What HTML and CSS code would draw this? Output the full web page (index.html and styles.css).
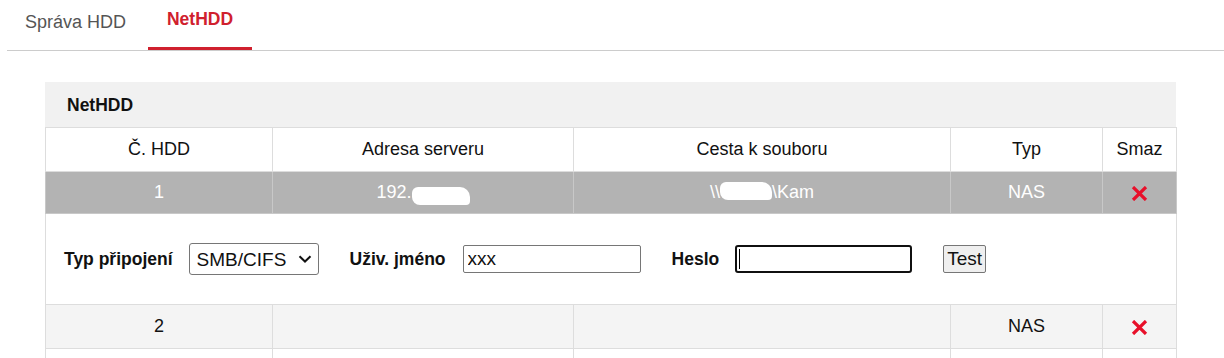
FILE: index.html
```html
<!DOCTYPE html>
<html lang="cs">
<head>
    <meta charset="UTF-8">
    <meta name="viewport" content="width=device-width, initial-scale=1.0">
    <title>NetHDD</title>
    <link rel="stylesheet" href="styles.css">
</head>
<body>
    <div class="tabs">
        <div class="tab">Správa HDD</div>
        <div class="tab tab-active">NetHDD</div>
    </div>

    <div class="panel">
        <div class="panel-head">NetHDD</div>
        <table class="hdd-table">
            <colgroup>
                <col style="width: 227px">
                <col style="width: 301px">
                <col style="width: 377px">
                <col style="width: 152px">
                <col style="width: 74px">
            </colgroup>
            <tr class="row-head">
                <th>Č. HDD</th>
                <th>Adresa serveru</th>
                <th>Cesta k souboru</th>
                <th>Typ</th>
                <th>Smaz</th>
            </tr>
            <tr class="row-selected">
                <td>1</td>
                <td>192.<span class="blot blot-ip"></span></td>
                <td>\\<span class="blot blot-path"></span>\Kam</td>
                <td>NAS</td>
                <td><svg class="del" width="17" height="15" viewBox="0 0 17 15"><path d="M2 1 L15 14 M15 1 L2 14" stroke="#e8102a" stroke-width="3.2"/></svg></td>
            </tr>
            <tr class="row-form">
                <td colspan="5">
                    <div class="conn">
                        <label class="conn-label">Typ připojení</label>
                        <span class="select-wrap">
                            <select class="conn-select"><option>SMB/CIFS</option></select>
                            <svg class="chevron" width="14" height="8" viewBox="0 0 14 8"><path d="M1.5 1.2 L7 6.5 L12.5 1.2" fill="none" stroke="#111" stroke-width="2"/></svg>
                        </span>
                        <label class="conn-label gap label-user">Uživ. jméno</label>
                        <input class="conn-input" type="text" value="xxx">
                        <label class="conn-label gap label-pass">Heslo</label>
                        <input class="conn-input input-focus" type="password">
                        <button class="btn-test">Test</button>
                    </div>
                </td>
            </tr>
            <tr class="row-alt">
                <td>2</td>
                <td></td>
                <td></td>
                <td>NAS</td>
                <td><svg class="del" width="17" height="15" viewBox="0 0 17 15"><path d="M2 1 L15 14 M15 1 L2 14" stroke="#e8102a" stroke-width="3.2"/></svg></td>
            </tr>
            <tr class="row-empty">
                <td></td>
                <td></td>
                <td></td>
                <td></td>
                <td></td>
            </tr>
        </table>
    </div>
</body>
</html>
```

FILE: styles.css
```css
body {
    font-family: "Liberation Sans", Arial, sans-serif;
    background-color: #fff;
    color: #111;
    margin: 0;
    padding: 0;
}
.tabs {
    display: flex;
    margin-left: 7px;
    height: 50px;
    border-bottom: 1px solid #cccccc;
    gap: 3px;
}
.tab {
    box-sizing: border-box;
    height: 50px;
    padding: 12px 19px 0 18px;
    font-size: 18px;
    line-height: 20px;
    color: #555;
}
.tab-active {
    width: 104px;
    padding: 9px 0 0;
    text-align: center;
    font-weight: bold;
    font-size: 17.5px;
    color: #d0202e;
    border-bottom: 3px solid #d0202e;
}
.panel {
    margin: 31px 48px 0 45px;
}
.panel-head {
    height: 45px;
    line-height: 46px;
    padding: 0 22px;
    background-color: #f1f1f1;
    font-weight: bold;
    font-size: 17.5px;
}
.hdd-table {
    width: 1131px;
    table-layout: fixed;
    border-collapse: collapse;
    font-size: 18px;
}
.hdd-table th,
.hdd-table td {
    border: 1px solid #dddddd;
    text-align: center;
    vertical-align: middle;
    padding: 0;
    font-weight: normal;
}
.row-head th {
    height: 43px;
}
.row-selected td {
    height: 41px;
    background-color: #b3b3b3;
    color: #fff;
    border-color: #c8c8c8;
}
.row-alt td {
    height: 43px;
    background-color: #f4f4f4;
}
.row-empty td {
    height: 43px;
}
.del {
    display: inline-block;
    vertical-align: middle;
}
.blot {
    display: inline-block;
    vertical-align: middle;
    background-color: #fff;
    height: 18px;
    border-radius: 6px 10px 4px 8px;
}
.blot-ip {
    width: 58px;
    margin-top: 6px;
}
.blot-path {
    width: 52px;
    margin-top: -4px;
}
.row-form td {
    height: 90px;
    text-align: left;
}
.conn {
    display: flex;
    align-items: center;
    padding-left: 18px;
}
.conn-label {
    font-weight: bold;
    font-size: 17.5px;
    margin-right: 15px;
}
.conn-label.gap {
    margin-left: 31px;
}
.label-user {
    margin-right: 17px;
}
.label-pass {
    margin-left: 31px;
    margin-right: 16px;
}
.select-wrap {
    position: relative;
    display: inline-block;
    margin-left: 1px;
}
.conn-select {
    appearance: none;
    -webkit-appearance: none;
    box-sizing: border-box;
    width: 130px;
    height: 32px;
    padding: 0 0 0 7px;
    border: 1px solid #767676;
    border-radius: 3px;
    background-color: #fff;
    font-family: "Liberation Sans", Arial, sans-serif;
    font-size: 19px;
    color: #111;
}
.chevron {
    position: absolute;
    right: 7px;
    top: 12px;
    pointer-events: none;
}
.conn-input {
    box-sizing: border-box;
    width: 178px;
    height: 28px;
    padding: 0 4px;
    border: 1px solid #767676;
    border-radius: 2px;
    font-family: "Liberation Sans", Arial, sans-serif;
    font-size: 19px;
    color: #111;
}
.input-focus {
    width: 177px;
    border: 2px solid #101010;
    border-radius: 3px;
    background: linear-gradient(#000, #000) no-repeat 2px center / 1px 20px, #fff;
}
.btn-test {
    margin-left: 31px;
    height: 28px;
    padding: 0 3px;
    background-color: #efefef;
    border: 1px solid #767676;
    border-radius: 2px;
    font-family: "Liberation Sans", Arial, sans-serif;
    font-size: 19px;
    color: #111;
}
```
